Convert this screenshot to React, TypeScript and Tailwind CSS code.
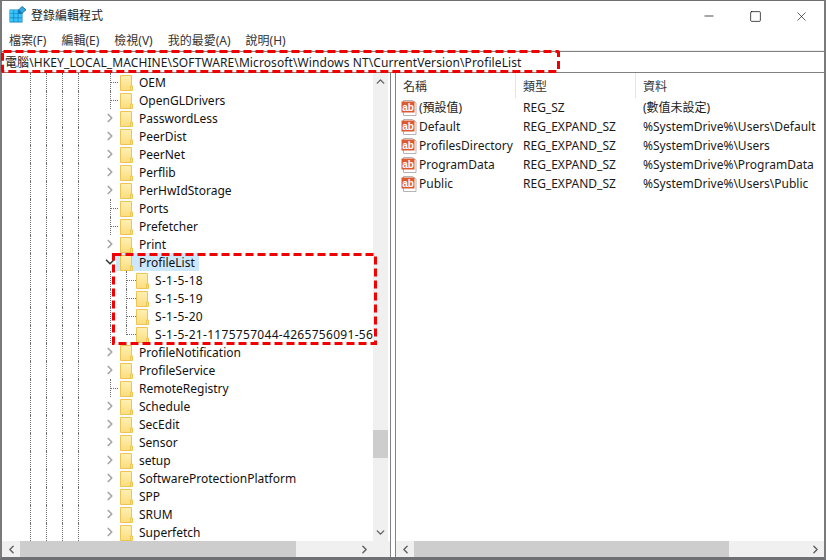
import React from "react";
import { ChevronDown, ChevronLeft, ChevronRight, ChevronUp, Minus, Square, X } from "lucide-react";

type TreeItem = {
  name: string;
  kind: "leaf" | "closed" | "open" | "child";
  last?: boolean;
};

const treeItems: TreeItem[] = [
  { name: "OEM", kind: "leaf" },
  { name: "OpenGLDrivers", kind: "leaf" },
  { name: "PasswordLess", kind: "closed" },
  { name: "PeerDist", kind: "closed" },
  { name: "PeerNet", kind: "closed" },
  { name: "Perflib", kind: "closed" },
  { name: "PerHwIdStorage", kind: "closed" },
  { name: "Ports", kind: "leaf" },
  { name: "Prefetcher", kind: "leaf" },
  { name: "Print", kind: "closed" },
  { name: "ProfileList", kind: "open" },
  { name: "S-1-5-18", kind: "child" },
  { name: "S-1-5-19", kind: "child" },
  { name: "S-1-5-20", kind: "child" },
  { name: "S-1-5-21-1175757044-4265756091-56", kind: "child", last: true },
  { name: "ProfileNotification", kind: "closed" },
  { name: "ProfileService", kind: "closed" },
  { name: "RemoteRegistry", kind: "leaf" },
  { name: "Schedule", kind: "closed" },
  { name: "SecEdit", kind: "closed" },
  { name: "Sensor", kind: "closed" },
  { name: "setup", kind: "closed" },
  { name: "SoftwareProtectionPlatform", kind: "closed" },
  { name: "SPP", kind: "closed" },
  { name: "SRUM", kind: "closed" },
  { name: "Superfetch", kind: "closed" },
];

const values = [
  { name: "(預設值)", type: "REG_SZ", data: "(數值未設定)" },
  { name: "Default", type: "REG_EXPAND_SZ", data: "%SystemDrive%\\Users\\Default" },
  { name: "ProfilesDirectory", type: "REG_EXPAND_SZ", data: "%SystemDrive%\\Users" },
  { name: "ProgramData", type: "REG_EXPAND_SZ", data: "%SystemDrive%\\ProgramData" },
  { name: "Public", type: "REG_EXPAND_SZ", data: "%SystemDrive%\\Users\\Public" },
];

const menus = ["檔案(F)", "編輯(E)", "檢視(V)", "我的最愛(A)", "說明(H)"];

const RegeditIcon = () => (
  <svg width="19" height="17" viewBox="0 0 19 17" className="mb-[3px] shrink-0">
    <rect x="0.5" y="3.5" width="13" height="13" fill="#0f7cc0" />
    <g fill="#38c4f8">
      <rect x="1" y="4" width="3.5" height="3.5" />
      <rect x="5.2" y="4" width="3.5" height="3.5" />
      <rect x="1" y="8" width="3.5" height="3.5" />
      <rect x="5.2" y="8" width="3.5" height="3.5" />
      <rect x="9.4" y="8" width="3.5" height="3.5" />
      <rect x="1" y="12.2" width="3.5" height="3.5" />
      <rect x="5.2" y="12.2" width="3.5" height="3.5" />
      <rect x="9.4" y="12.2" width="3.5" height="3.5" />
    </g>
    <path d="M13 0.5 L17 3.8 L13 7.2 L9.8 3.8 Z" fill="#38a8e0" stroke="#1b78b4" />
  </svg>
);

const FolderIcon = () => (
  <svg width="13" height="16" viewBox="0 0 13 16" className="mt-[2px] shrink-0">
    <defs>
      <linearGradient id="folderFill" x1="0" y1="0" x2="0" y2="1">
        <stop offset="0" stopColor="#fff0b4" />
        <stop offset="1" stopColor="#fddc7c" />
      </linearGradient>
    </defs>
    <path d="M0.5 0.5 H11.5 V15.5 H0.5 Z" fill="url(#folderFill)" stroke="#ecc655" />
    <path d="M10.5 11 H12.5 V15.5 H10.5 Z" fill="#fbe08a" stroke="#ecc655" />
  </svg>
);

const ValueIcon = () => (
  <svg width="16" height="16" viewBox="0 0 16 16" className="shrink-0">
    <path d="M2.5 0.5 H11.5 L15 3 V15.5 H2.5 Z" fill="#ffffff" stroke="#b4b4b4" />
    <rect x="0.5" y="1.5" width="13" height="11" fill="#dc5a30" />
    <text x="7" y="10.5" textAnchor="middle" fontSize="10" fontWeight="700" fill="#ffffff" fontFamily="'Liberation Sans', sans-serif">
      ab
    </text>
  </svg>
);

const Guide = () => (
  <div className="flex h-full w-4 shrink-0 justify-center">
    <div className="h-full border-l border-dotted border-[#707070]" />
  </div>
);

const TreeRow = ({ item }: { item: TreeItem }) => {
  const isChild = item.kind === "child";
  const isOpen = item.kind === "open";
  return (
    <div className="flex h-[18px] shrink-0 items-center overflow-hidden">
      <div className="w-5 shrink-0" />
      <Guide />
      <Guide />
      <Guide />
      <Guide />
      <div className="w-4 shrink-0" />
      <div className="relative flex h-full w-[18px] shrink-0 items-center justify-center pr-0.5">
        {item.kind === "closed" && <ChevronRight size={14} strokeWidth={3} className="text-[#a6a6a6]" />}
        {isOpen && <ChevronDown size={14} strokeWidth={3} className="text-[#404040]" />}
        {item.kind === "leaf" && (
          <>
            <div className="absolute top-0 left-2 h-full border-l border-dotted border-[#707070]" />
            <div className="absolute top-[9px] left-2 w-2 border-t border-dotted border-[#707070]" />
          </>
        )}
        {isChild && <div className="absolute top-0 left-2 h-full border-l border-dotted border-[#707070]" />}
      </div>
      {isChild && (
        <div className="relative h-full w-4 shrink-0">
          <div className={`absolute top-0 left-1.5 border-l border-dotted border-[#707070] ${item.last ? "h-[10px]" : "h-full"}`} />
          <div className="absolute top-[9px] left-1.5 w-2.5 border-t border-dotted border-[#707070]" />
        </div>
      )}
      <div className={`flex h-full items-start ${isOpen ? "-ml-1 bg-[#cce8ff] pr-[3px] pl-1" : ""}`}>
        <FolderIcon />
        <span
          className={`ml-[5px] px-[1px] pt-[1px] text-[12px] leading-[18px] whitespace-nowrap text-[#111111] ${
            isChild ? "tracking-[0.3px]" : ""
          }`}
        >
          {item.name}
        </span>
      </div>
    </div>
  );
};

export default function App() {
  return (
    <div
      className="flex h-[560px] w-[826px] flex-col overflow-hidden border-x-2 border-t border-b-[3px] border-x-[#7a7a7a] border-t-[#6e6e6e] border-b-[#6e7074] bg-white text-[12px] text-[#1a1a1a]"
      style={{ fontFamily: '"Noto Sans", "Noto Sans CJK TC", sans-serif' }}
    >
      {/* title bar */}
      <div className="flex h-[30px] shrink-0 items-center pl-[7px]">
        <RegeditIcon />
        <span className="ml-[3px] text-[12px]">登錄編輯程式</span>
        <div className="ml-auto flex items-center text-black">
          <div className="flex w-[46px] justify-center">
            <Minus size={14} strokeWidth={1.2} />
          </div>
          <div className="flex w-[46px] justify-center">
            <Square size={13} strokeWidth={1.3} />
          </div>
          <div className="flex w-[46px] justify-center">
            <X size={15} strokeWidth={1} />
          </div>
        </div>
      </div>

      {/* menu */}
      <div className="flex h-[20px] shrink-0 items-center gap-[15px] border-b border-[#f0f0f0] pl-[7px] text-[#333333]">
        {menus.map((m) => (
          <span key={m}>{m}</span>
        ))}
      </div>

      {/* address bar */}
      <div className="flex h-[22px] shrink-0 items-center border-y border-[#808080] pt-[1px] pl-[3px] tracking-[0.1px] whitespace-nowrap">
        電腦\HKEY_LOCAL_MACHINE\SOFTWARE\Microsoft\Windows NT\CurrentVersion\ProfileList
      </div>

      {/* panes */}
      <div className="flex min-h-0 flex-1">
        <div className="flex w-[389px] shrink-0 flex-col border-r border-[#808488]">
          <div className="flex min-h-0 flex-1">
            <div className="flex min-w-0 flex-1 flex-col overflow-hidden">
              {treeItems.map((item) => (
                <TreeRow key={item.name} item={item} />
              ))}
            </div>
            <div className="mr-0.5 flex w-[15px] shrink-0 flex-col items-center bg-[#f0f0f0]">
              <div className="flex h-[17px] items-center justify-center">
                <ChevronUp size={13} strokeWidth={2.6} className="text-[#606060]" />
              </div>
              <div className="mt-[340px] h-7 w-full bg-[#cdcdcd]" />
              <div className="mt-auto flex h-[17px] items-center justify-center">
                <ChevronDown size={13} strokeWidth={2.6} className="text-[#606060]" />
              </div>
            </div>
          </div>
          <div className="flex h-4 shrink-0 items-center bg-[#f0f0f0]">
            <div className="flex w-[18px] justify-center">
              <ChevronLeft size={13} strokeWidth={2.6} className="text-[#606060]" />
            </div>
            <div className="h-full w-[276px] bg-[#cdcdcd]" />
            <div className="mr-[17px] ml-auto flex w-[18px] justify-center">
              <ChevronRight size={13} strokeWidth={2.6} className="text-[#606060]" />
            </div>
          </div>
        </div>
        <div className="w-1 shrink-0" />
        <div className="flex min-w-0 flex-1 flex-col border-l border-[#808488]">
          <div className="flex h-[25px] shrink-0 items-center text-[#333333]">
            <div className="flex h-full w-[120px] items-center border-r border-[#e5e5e5] pt-[2px] pl-[7px]">名稱</div>
            <div className="flex h-full w-[120px] items-center border-r border-[#e5e5e5] pt-[2px] pl-[7px]">類型</div>
            <div className="pt-[2px] pl-[7px]">資料</div>
          </div>
          <div className="flex min-h-0 flex-1 flex-col">
            {values.map((v) => (
              <div key={v.name} className="flex h-[19px] shrink-0 items-center whitespace-nowrap">
                <div className="flex w-[120px] items-center pl-[5px]">
                  <ValueIcon />
                  <span className="ml-0.5">{v.name}</span>
                </div>
                <div className="w-[120px] pl-[7px]">{v.type}</div>
                <div className="pl-[7px]">{v.data}</div>
              </div>
            ))}
          </div>
          <div className="flex h-4 shrink-0 items-center bg-[#f0f0f0]">
            <div className="flex w-[18px] justify-center">
              <ChevronLeft size={13} strokeWidth={2.6} className="text-[#606060]" />
            </div>
            <div className="h-full w-[315px] bg-[#cdcdcd]" />
            <div className="ml-auto flex w-[18px] justify-center">
              <ChevronRight size={13} strokeWidth={2.6} className="text-[#606060]" />
            </div>
          </div>
        </div>
      </div>

      {/* red annotation boxes */}
      <svg className="pointer-events-none absolute top-0 left-0" width="826" height="560">
        <rect x="2.5" y="51.5" width="556" height="20" rx="1" fill="none" stroke="#f00000" strokeWidth="3" strokeDasharray="8 4" />
        <rect x="113.5" y="254.5" width="262" height="89" fill="none" stroke="#f00000" strokeWidth="3" strokeDasharray="8 4" />
      </svg>
    </div>
  );
}
